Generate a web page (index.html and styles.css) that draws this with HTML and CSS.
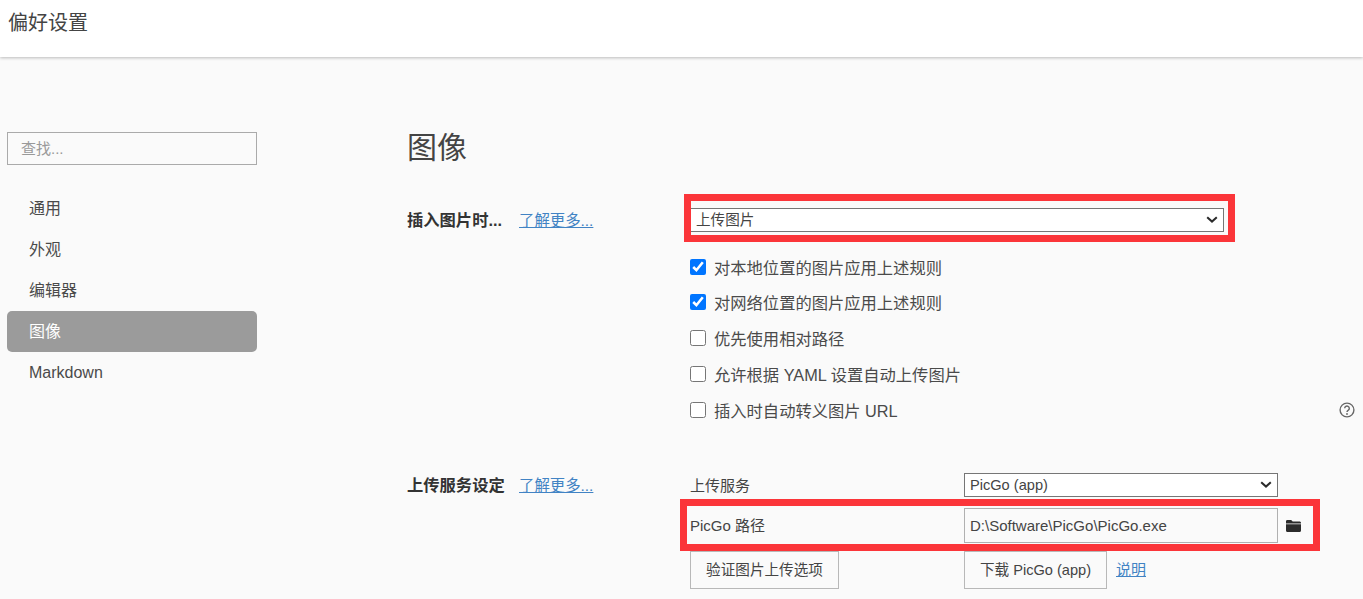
FILE: index.html
```html
<!DOCTYPE html>
<html lang="zh-CN">
<head>
<meta charset="utf-8">
<title>偏好设置</title>
<link rel="stylesheet" href="styles.css">
</head>
<body>
<header class="topbar"><h2 class="window-title">偏好设置</h2></header>
<div class="layout">
  <aside class="sidebar">
    <input class="search" type="text" placeholder="查找...">
    <nav class="nav">
      <a class="nav-item">通用</a>
      <a class="nav-item">外观</a>
      <a class="nav-item">编辑器</a>
      <a class="nav-item active">图像</a>
      <a class="nav-item">Markdown</a>
    </nav>
  </aside>
  <main class="content">
    <h1 class="page-title">图像</h1>
    <section class="group group-insert">
      <div class="group-label"><strong>插入图片时...</strong><a class="more">了解更多...</a></div>
      <div class="group-body">
        <div class="select-wrap select-wide">
          <select class="select"><option>上传图片</option></select>
          <svg class="chevron" viewBox="0 0 12 7" aria-hidden="true"><path d="M1.200 1.200 6 5.600l4.800-4.400" fill="none" stroke="#2b2b2b" stroke-width="2"/></svg>
        </div>
        <div class="checks">
          <label class="check"><input type="checkbox" checked><span>对本地位置的图片应用上述规则</span></label>
          <label class="check"><input type="checkbox" checked><span>对网络位置的图片应用上述规则</span></label>
          <label class="check"><input type="checkbox"><span>优先使用相对路径</span></label>
          <label class="check"><input type="checkbox"><span>允许根据 YAML 设置自动上传图片</span></label>
          <label class="check"><input type="checkbox"><span>插入时自动转义图片 URL</span>
            <svg class="help" viewBox="0 0 16 16" aria-hidden="true"><circle cx="8" cy="8" r="6.9" fill="none" stroke="#666" stroke-width="1.4"/><path d="M5.700 6.300a2.300 2.300 0 1 1 3.600 1.900c-.8.500-1.300.9-1.300 1.900" fill="none" stroke="#666" stroke-width="1.400"/><circle cx="8" cy="12" r=".9" fill="#666"/></svg>
          </label>
        </div>
      </div>
    </section>
    <section class="group group-upload">
      <div class="group-label"><strong>上传服务设定</strong><a class="more">了解更多...</a></div>
      <div class="group-body">
        <div class="field field-service">
          <span class="field-label">上传服务</span>
          <div class="select-wrap select-service">
            <select class="select"><option>PicGo (app)</option></select>
            <svg class="chevron" viewBox="0 0 12 7" aria-hidden="true"><path d="M1.200 1.200 6 5.600l4.800-4.400" fill="none" stroke="#2b2b2b" stroke-width="2"/></svg>
          </div>
        </div>
        <div class="field field-path">
          <span class="field-label">PicGo 路径</span>
          <input class="path" type="text" value="D:\Software\PicGo\PicGo.exe">
          <svg class="folder" viewBox="0 0 15 12" aria-hidden="true"><path d="M1.300 0h3.900l1.500 1.500h6.900c.7 0 1.400.6 1.400 1.300v.7H0V1.300C0 .6.600 0 1.300 0z" fill="#2b2b2b"/><path d="M0 4.300h15v6.200c0 .8-.6 1.500-1.400 1.500H1.400C.6 12 0 11.300 0 10.500z" fill="#2b2b2b"/></svg>
        </div>
        <div class="field field-actions">
          <div class="field-slot"><button class="btn btn-verify" type="button">验证图片上传选项</button></div>
          <button class="btn btn-download" type="button">下载 PicGo (app)</button>
          <a class="more doc">说明</a>
        </div>
      </div>
    </section>
  </main>
</div>
<div class="mark mark-select"></div>
<div class="mark mark-path"></div>
</body>
</html>
```
FILE: styles.css
```css
* { box-sizing: border-box; }
html, body { margin: 0; height: 100%; overflow: hidden; }
body {
  background: #fafafa;
  color: #444;
  font-family: "Liberation Sans", "Noto Sans CJK SC", sans-serif;
  font-size: 15px;
}
.topbar {
  height: 57px;
  background: #fff;
  box-shadow: 0 1px 3px rgba(0, 0, 0, .25);
  padding: 11px 8px 0;
  position: relative;
}
.window-title {
  margin: 0;
  font-size: 20px;
  font-weight: 400;
  line-height: 24px;
  color: #444;
}
.layout { display: flex; }
.sidebar { width: 257px; margin-left: 7px; padding-top: 75px; flex: none; }
.search {
  display: block;
  width: 250px;
  height: 33px;
  padding: 0 13px;
  border: 1px solid #aaa;
  background: #fafafa;
  font: inherit;
  color: #333;
  border-radius: 0;
  outline: none;
}
.search::placeholder { color: #999; }
.nav { margin-top: 23px; width: 250px; }
.nav-item {
  display: block;
  height: 41px;
  line-height: 41px;
  padding-left: 22px;
  font-size: 16px;
  color: #4a4a4a;
  border-radius: 5px;
}
.nav-item.active { background: #9b9b9b; color: #fff; }
.content { flex: 1; padding-left: 143px; padding-top: 71px; padding-right: 8px; }
.page-title {
  margin: 0;
  font-size: 30px;
  font-weight: 400;
  line-height: 40px;
  color: #444;
}
.group { display: flex; }
.group-insert { margin-top: 40px; }
.group-upload { margin-top: 45.600px; }
.group-label { width: 283px; flex: none; font-size: 16.300px; line-height: 24px; white-space: nowrap; }
.group-label strong { display: inline-block; min-width: 98px; font-weight: 700; color: #333; }
.more {
  color: #4183c4;
  text-decoration: underline;
  margin-left: 14px;
  font-size: 15.400px;
}
.group-body { flex: 1; min-width: 0; }
.select-wrap { position: relative; height: 24px; }
.select {
  display: block;
  width: 100%;
  height: 24px;
  font: inherit;
  font-size: 14.600px;
  color: #444;
  background-color: #fff;
  border: 1px solid #767676;
  border-radius: 0;
  padding: 0 5px;
  appearance: none;
  -webkit-appearance: none;
}
.chevron {
  position: absolute;
  right: 6px;
  top: 8px;
  width: 12px;
  height: 7px;
  pointer-events: none;
}
.select-wide { width: 534px; }
.checks { margin-top: 16.700px; }
.check {
  display: flex;
  align-items: center;
  height: 35.800px;
  font-size: 16.300px;
  color: #4a4a4a;
  position: relative;
}
.check input { width: 16px; height: 16px; margin: 0 8px 0 0; accent-color: #0075ff; flex: none; }
.help { margin-left: auto; width: 16px; height: 16px; flex: none; }
.field { display: flex; align-items: center; }
.field-label { width: 274px; flex: none; color: #444; padding-bottom: 2px; }
.field-slot { width: 274px; flex: none; }
.select-service { width: 314px; }
.field-service { height: 24px; }
.field-path { margin-top: 11px; height: 35px; }
.path {
  width: 314px;
  height: 35px;
  padding: 0 5px;
  font: inherit;
  font-size: 15px;
  color: #444;
  background: #fafafa;
  border: 1px solid #b0b0b0;
  border-radius: 0;
  outline: none;
}
.folder { width: 15px; height: 12px; margin-left: 8px; flex: none; }
.field-actions { margin-top: 8px; }
.btn {
  display: block;
  height: 38px;
  padding: 0 0 3px;
  font: inherit;
  font-size: 14.600px;
  color: #444;
  background: #fafafa;
  border: 1px solid #b8b8b8;
  border-radius: 0;
}
.btn-verify { width: 149px; }
.btn-download { width: 143px; }
.doc { margin-left: 9px; margin-bottom: 4px; font-size: 15px; }
.mark { position: absolute; border: 7px solid #fb3539; pointer-events: none; }
.mark-select { left: 684px; top: 194px; width: 551px; height: 48px; }
.mark-path { left: 680px; top: 499px; width: 640px; height: 52px; }
```
